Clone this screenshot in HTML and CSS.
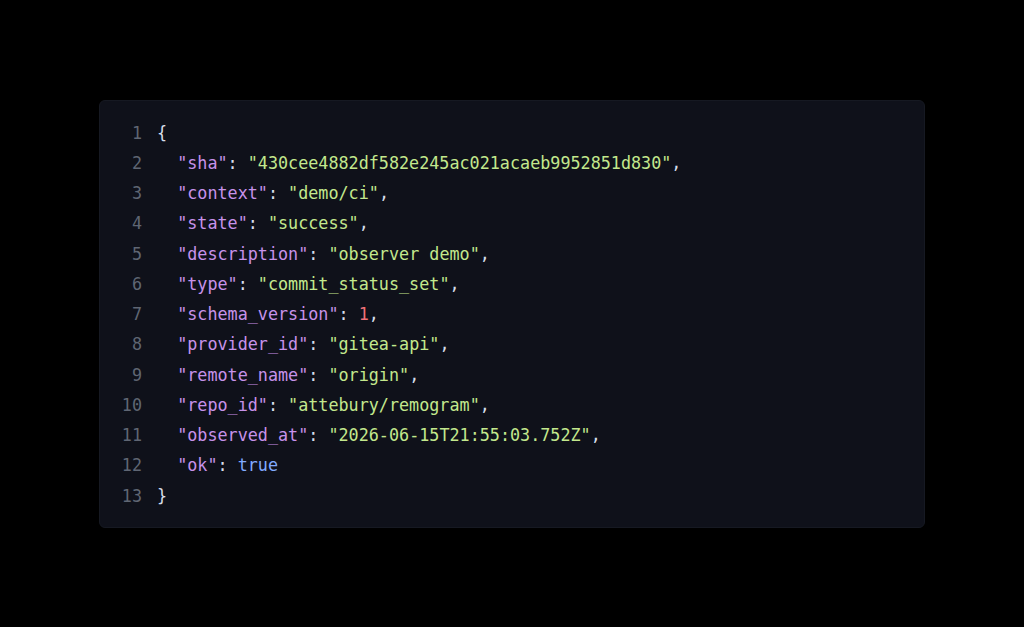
FILE: index.html
```html
<!DOCTYPE html>
<html lang="en">
<head>
<meta charset="utf-8">
<title>JSON</title>
<link rel="stylesheet" href="styles.css">
</head>
<body>
<main class="stage">
  <div class="card">
    <pre class="code"><span class="ln">1</span><span class="p">{</span>
<span class="ln">2</span>  <span class="k">"sha"</span><span class="p">: </span><span class="s">"430cee4882df582e245ac021acaeb9952851d830"</span><span class="p">,</span>
<span class="ln">3</span>  <span class="k">"context"</span><span class="p">: </span><span class="s">"demo/ci"</span><span class="p">,</span>
<span class="ln">4</span>  <span class="k">"state"</span><span class="p">: </span><span class="s">"success"</span><span class="p">,</span>
<span class="ln">5</span>  <span class="k">"description"</span><span class="p">: </span><span class="s">"observer demo"</span><span class="p">,</span>
<span class="ln">6</span>  <span class="k">"type"</span><span class="p">: </span><span class="s">"commit_status_set"</span><span class="p">,</span>
<span class="ln">7</span>  <span class="k">"schema_version"</span><span class="p">: </span><span class="n">1</span><span class="p">,</span>
<span class="ln">8</span>  <span class="k">"provider_id"</span><span class="p">: </span><span class="s">"gitea-api"</span><span class="p">,</span>
<span class="ln">9</span>  <span class="k">"remote_name"</span><span class="p">: </span><span class="s">"origin"</span><span class="p">,</span>
<span class="ln">10</span>  <span class="k">"repo_id"</span><span class="p">: </span><span class="s">"attebury/remogram"</span><span class="p">,</span>
<span class="ln">11</span>  <span class="k">"observed_at"</span><span class="p">: </span><span class="s">"2026-06-15T21:55:03.752Z"</span><span class="p">,</span>
<span class="ln">12</span>  <span class="k">"ok"</span><span class="p">: </span><span class="b">true</span>
<span class="ln">13</span><span class="p">}</span></pre>
  </div>
</main>
</body>
</html>
```

FILE: styles.css
```css
html, body {
  margin: 0;
  padding: 0;
  background: #000;
}
.stage {
  width: 1024px;
  height: 627px;
  display: flex;
  align-items: center;
  justify-content: center;
}
.card {
  width: 826px;
  height: 428px;
  box-sizing: border-box;
  background: #0f111a;
  border: 1px solid #161922;
  border-radius: 6px;
  padding: 17px 0 0 21px;
}
.code {
  margin: 0;
  font-family: "DejaVu Sans Mono", "Liberation Mono", monospace;
  font-size: 16.75px;
  line-height: 30.25px;
  color: #d6deeb;
}
.ln {
  display: inline-block;
  width: 21px;
  text-align: right;
  margin-right: 15px;
  color: #5f6673;
}
.p { color: #d6deeb; }
.k { color: #c792ea; }
.s { color: #c3e88d; }
.n { color: #f07178; }
.b { color: #82aaff; }
```
